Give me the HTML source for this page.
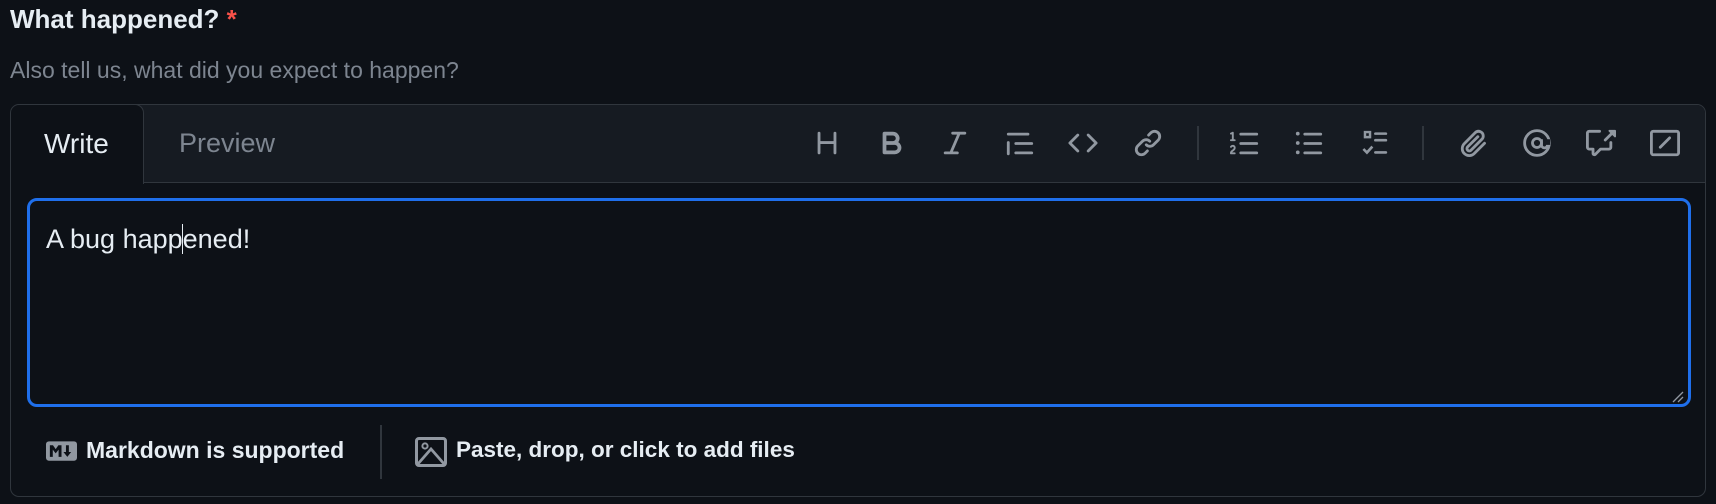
<!DOCTYPE html>
<html><head><meta charset="utf-8"><style>
*{margin:0;padding:0;box-sizing:border-box}
body{width:1716px;height:504px;background:#0d1117;font-family:"Liberation Sans",sans-serif;position:relative;overflow:hidden;color:#e6edf3}
.a{position:absolute;white-space:nowrap;line-height:1.15}
.ic{position:absolute;top:128px;width:30px;height:30px}
.ic svg{width:30px;height:30px;fill:#9198a1}
</style></head><body>
<div class="a" style="left:10px;top:5px;font-size:26px;font-weight:bold">What happened? <span style="color:#f85149">*</span></div>
<div class="a" style="left:10px;top:57px;font-size:23px;color:#7d8590">Also tell us, what did you expect to happen?</div>

<div class="a" style="left:10px;top:104px;width:1696px;height:393px;border:1.5px solid #30363d;border-radius:9px;background:#0d1117;overflow:hidden">
  <div class="a" style="left:0;top:0;width:1696px;height:78px;background:#161b22;border-bottom:1.5px solid #30363d"></div>
  <div class="a" style="left:-1px;top:-1px;width:134px;height:80px;background:#0d1117;border:1.5px solid #30363d;border-bottom:none;border-radius:9px 9px 0 0"></div>
  <div class="a" style="left:33px;top:23px;font-size:28px;color:#e6edf3">Write</div>
  <div class="a" style="left:168px;top:23px;font-size:27px;color:#7d8590">Preview</div>
</div>

<div class="ic" style="left:812px"><svg viewBox="0 0 16 16"><path d="M3.75 2a.75.75 0 0 1 .75.75V7h7V2.75a.75.75 0 0 1 1.5 0v10.5a.75.75 0 0 1-1.5 0V8.5h-7v4.75a.75.75 0 0 1-1.5 0V2.75A.75.75 0 0 1 3.75 2Z"/></svg></div>
<div class="ic" style="left:877px"><svg viewBox="0 0 16 16"><path d="M4 2h4.5a3.501 3.501 0 0 1 2.852 5.53A3.499 3.499 0 0 1 9.5 14H4a1 1 0 0 1-1-1V3a1 1 0 0 1 1-1Zm1 7v3h4.5a1.5 1.5 0 0 0 0-3Zm3.5-2a1.5 1.5 0 0 0 0-3H5v3Z"/></svg></div>
<div class="ic" style="left:940px"><svg viewBox="0 0 16 16"><path d="M6 2.75A.75.75 0 0 1 6.75 2h6.5a.75.75 0 0 1 0 1.5h-2.505l-3.858 9H9.25a.75.75 0 0 1 0 1.5h-6.5a.75.75 0 0 1 0-1.5h2.505l3.858-9H6.75A.75.75 0 0 1 6 2.75Z"/></svg></div>
<div class="ic" style="left:1005px"><svg viewBox="0 0 16 16"><path d="M1.75 2.5h10.5a.75.75 0 0 1 0 1.5H1.75a.75.75 0 0 1 0-1.5Zm4 5h8.5a.75.75 0 0 1 0 1.5h-8.5a.75.75 0 0 1 0-1.5Zm0 5h8.5a.75.75 0 0 1 0 1.5h-8.5a.75.75 0 0 1 0-1.5ZM2.5 7.75v6a.75.75 0 0 1-1.5 0v-6a.75.75 0 0 1 1.5 0Z"/></svg></div>
<div class="ic" style="left:1068px"><svg viewBox="0 0 16 16"><path d="m11.28 3.22 4.25 4.25a.75.75 0 0 1 0 1.06l-4.25 4.25a.749.749 0 0 1-1.275-.326.749.749 0 0 1 .215-.734L13.94 8l-3.72-3.72a.749.749 0 0 1 .326-1.275.749.749 0 0 1 .734.215Zm-6.56 0a.751.751 0 0 1 1.042.018.751.751 0 0 1 .018 1.042L2.06 8l3.72 3.72a.749.749 0 0 1-.326 1.275.749.749 0 0 1-.734-.215L.47 8.53a.75.75 0 0 1 0-1.06Z"/></svg></div>
<div class="ic" style="left:1133px"><svg viewBox="0 0 16 16"><path d="m7.775 3.275 1.25-1.25a3.5 3.5 0 1 1 4.950 4.950l-2.5 2.5a3.5 3.5 0 0 1-4.950 0 .751.751 0 0 1 .018-1.042.751.751 0 0 1 1.042-.018 1.998 1.998 0 0 0 2.830 0l2.5-2.5a2.002 2.002 0 0 0-2.830-2.830l-1.250 1.250a.751.751 0 0 1-1.042-.018.751.751 0 0 1-.018-1.042Zm-4.690 9.640a1.998 1.998 0 0 0 2.830 0l1.250-1.250a.751.751 0 0 1 1.042.018.751.751 0 0 1 .018 1.042l-1.250 1.250a3.5 3.5 0 1 1-4.950-4.950l2.5-2.5a3.5 3.5 0 0 1 4.950 0 .751.751 0 0 1-.018 1.042.751.751 0 0 1-1.042.018 1.998 1.998 0 0 0-2.830 0l-2.5 2.5a1.998 1.998 0 0 0 0 2.830Z"/></svg></div>
<div class="a" style="left:1197px;top:126px;width:1.5px;height:34px;background:#30363d"></div>
<div class="ic" style="left:1230px"><svg viewBox="0 0 16 16"><path d="M5 3.25a.75.75 0 0 1 .75-.75h8.5a.75.75 0 0 1 0 1.5h-8.5A.75.75 0 0 1 5 3.25Zm0 5a.75.75 0 0 1 .75-.75h8.5a.75.75 0 0 1 0 1.5h-8.5A.75.75 0 0 1 5 8.25Zm0 5a.75.75 0 0 1 .75-.75h8.5a.75.75 0 0 1 0 1.5h-8.5a.75.75 0 0 1-.75-.75ZM.924 10.32a.5.5 0 0 1-.851-.525l.001-.001.001-.002.002-.004.007-.011c.097-.144.215-.273.348-.384.228-.19.588-.392 1.068-.392.468 0 .858.181 1.126.484.259.294.377.673.377 1.038 0 .987-.686 1.495-1.156 1.845l-.047.035c-.303.225-.522.4-.654.597h1.357a.5.5 0 0 1 0 1H.5a.5.5 0 0 1-.5-.5c0-1.005.692-1.52 1.167-1.875l.035-.025c.531-.396.8-.625.8-1.078a.57.57 0 0 0-.128-.376C1.806 10.068 1.695 10 1.5 10a.658.658 0 0 0-.429.163.835.835 0 0 0-.144.153ZM2.003 2.5V6h.503a.5.5 0 0 1 0 1H.5a.5.5 0 0 1 0-1h.503V3.308l-.28.14a.5.5 0 0 1-.446-.895l1.003-.5a.5.5 0 0 1 .723.447Z"/></svg></div>
<div class="ic" style="left:1294px"><svg viewBox="0 0 16 16"><path d="M5.75 2.5h8.5a.75.75 0 0 1 0 1.5h-8.5a.75.75 0 0 1 0-1.5Zm0 5h8.5a.75.75 0 0 1 0 1.5h-8.5a.75.75 0 0 1 0-1.5Zm0 5h8.5a.75.75 0 0 1 0 1.5h-8.5a.75.75 0 0 1 0-1.5ZM2 14a1 1 0 1 1 0-2 1 1 0 0 1 0 2Zm1-6a1 1 0 1 1-2 0 1 1 0 0 1 2 0ZM2 4a1 1 0 1 1 0-2 1 1 0 0 1 0 2Z"/></svg></div>
<div class="ic" style="left:1360px"><svg viewBox="0 0 16 16"><path d="M2 1.5h4v4H2Zm1.3 1.3v1.4h1.4V2.8Z"/><rect x="7.5" y="2.3" width="7" height="1.4" rx=".7"/><rect x="7.5" y="5.8" width="7" height="1.4" rx=".7" /><rect x="7.5" y="12.3" width="7" height="1.4" rx=".7"/><path d="M1.8 11.2l1.9 1.9 2.9-3.2" fill="none" stroke="#9198a1" stroke-width="1.4"/></svg></div>
<div class="a" style="left:1422px;top:126px;width:1.5px;height:34px;background:#30363d"></div>
<div class="ic" style="left:1458px"><svg viewBox="0 0 16 16"><path d="M12.212 3.02a1.753 1.753 0 0 0-2.478.003l-5.83 5.83a3.007 3.007 0 0 0-.88 2.127c0 .795.315 1.551.88 2.116.567.567 1.333.89 2.126.89.79 0 1.548-.321 2.116-.89l5.48-5.48a.75.75 0 0 1 1.061 1.06l-5.48 5.48a4.492 4.492 0 0 1-3.177 1.33c-1.2 0-2.345-.487-3.187-1.33a4.483 4.483 0 0 1-1.32-3.177c0-1.195.475-2.341 1.32-3.186l5.83-5.83a3.25 3.25 0 0 1 5.553 2.297c0 .863-.343 1.691-.953 2.301L7.439 12.390c-.375.377-.884.590-1.416.593a1.998 1.998 0 0 1-1.412-.593 1.992 1.992 0 0 1 0-2.828l5.48-5.480a.751.751 0 0 1 1.042.018.751.751 0 0 1 .018 1.042l-5.48 5.480a.492.492 0 0 0 0 .707.499.499 0 0 0 .7 0l5.833-5.833a1.755 1.755 0 0 0 .008-2.474Z"/></svg></div>
<div class="ic" style="left:1522px"><svg viewBox="0 0 16 16"><circle cx="8" cy="8" r="6.6" fill="none" stroke="#9198a1" stroke-width="1.5"/><circle cx="8" cy="8" r="2.4" fill="none" stroke="#9198a1" stroke-width="1.5"/><path d="M10.4 6v3a1.6 1.6 0 0 0 3.2 0V8" fill="none" stroke="#9198a1" stroke-width="1.5"/><rect x="12" y="6" width="3" height="3" fill="#161b22"/></svg></div>
<div class="ic" style="left:1586px"><svg viewBox="0 0 16 16"><path d="M1.75 1h5.5a.75.75 0 0 1 0 1.5h-5.5a.25.25 0 0 0-.25.25v7.5c0 .138.112.25.25.25h2a.75.75 0 0 1 .75.75v2.19l2.72-2.72a.749.749 0 0 1 .53-.22h4.5a.25.25 0 0 0 .25-.25v-2.5a.75.75 0 0 1 1.5 0v2.5A1.75 1.75 0 0 1 12.25 12H8.06l-2.573 2.573A1.458 1.458 0 0 1 3 13.543V12H1.75A1.75 1.75 0 0 1 0 10.25v-7.5C0 1.784.784 1 1.75 1ZM12.5 1h3a.5.5 0 0 1 .5.5v3a.5.5 0 0 1-.854.354L14 3.707l-3.22 3.22a.749.749 0 0 1-1.275-.326.749.749 0 0 1 .215-.734L12.94 2.650l-.794-.796A.5.5 0 0 1 12.5 1Z"/></svg></div>
<div class="ic" style="left:1650px"><svg viewBox="0 0 16 16"><path d="M1.75 1h12.5c.966 0 1.75.784 1.75 1.75v10.5A1.75 1.75 0 0 1 14.25 15H1.75A1.75 1.75 0 0 1 0 13.25V2.75C0 1.784.784 1 1.75 1Zm0 1.5a.25.25 0 0 0-.25.25v10.5c0 .138.112.25.25.25h12.5a.25.25 0 0 0 .25-.25V2.75a.25.25 0 0 0-.25-.25ZM11 4.75a.75.75 0 0 1 .22.53.749.749 0 0 1-.22.53l-5 5a.749.749 0 0 1-1.275-.326.749.749 0 0 1 .215-.734l5-5A.75.75 0 0 1 11 4.75Z"/></svg></div>

<div class="a" style="left:27px;top:198px;width:1664px;height:209px;border:3px solid #1f6feb;border-radius:10px"></div>
<div class="a" style="left:46px;top:224px;font-size:27px;color:#e6edf3">A bug happ<span style="border-left:1.5px solid #e6edf3;margin-left:-1px"></span>ened!</div>
<svg class="a" style="left:1670px;top:389px" width="14" height="14" viewBox="0 0 14 14"><path d="M3 13L13 3M8 13L13 8" stroke="#9198a1" stroke-width="1.3"/></svg>

<svg class="a" style="left:46px;top:441px" width="31" height="20" viewBox="0 0 16 10"><rect width="16" height="10" rx="1.5" fill="#9198a1"/><path d="M2 8V2h1.6l1.4 2 1.4-2H8v6H6.5V4.3L5 6.2 3.5 4.3V8Zm9 0L9 5.5h1.3V2h1.5v3.5H13Z" fill="#0d1117"/></svg>
<div class="a" style="left:86px;top:437px;font-size:23px;font-weight:bold;color:#e6edf3">Markdown is supported</div>
<div class="a" style="left:380px;top:425px;width:1.5px;height:54px;background:#30363d"></div>
<svg class="a" style="left:415px;top:437px" width="32" height="30" viewBox="0 0 16 15"><rect x="0.75" y="0.75" width="14.5" height="13.5" rx="1.2" fill="none" stroke="#9198a1" stroke-width="1.5"/><circle cx="5" cy="4.5" r="1.3" fill="none" stroke="#9198a1" stroke-width="1"/><path d="M1 14L8 6l7 8" fill="none" stroke="#9198a1" stroke-width="1.4"/></svg>
<div class="a" style="left:456px;top:437px;font-size:22.5px;font-weight:bold;color:#e6edf3">Paste, drop, or click to add files</div>
</body></html>
